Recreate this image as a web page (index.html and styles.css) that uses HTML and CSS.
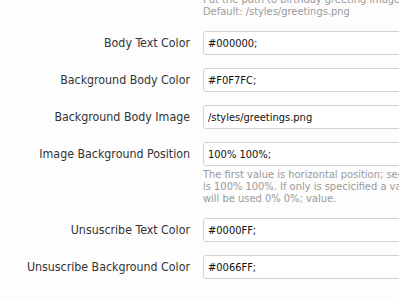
FILE: index.html
```html
<!DOCTYPE html>
<html>
<head>
<meta charset="utf-8">
<link rel="stylesheet" href="styles.css">
</head>
<body>
<div class="form">
  <div class="row">
    <div class="label"></div>
    <div class="field">
      <p class="hint">Put the path to birthday greeting image.<br>Default: /styles/greetings.png</p>
    </div>
  </div>
  <div class="row">
    <label class="label">Body Text Color</label>
    <div class="field"><input class="input" type="text" value="#000000;"></div>
  </div>
  <div class="row">
    <label class="label">Background Body Color</label>
    <div class="field"><input class="input" type="text" value="#F0F7FC;"></div>
  </div>
  <div class="row">
    <label class="label">Background Body Image</label>
    <div class="field"><input class="input" type="text" value="/styles/greetings.png"></div>
  </div>
  <div class="row">
    <label class="label">Image Background Position</label>
    <div class="field">
      <input class="input" type="text" value="100% 100%;">
      <p class="hint">The first value is horizontal position; second value is vertical position. Default value<br>is 100% 100%. If only is specicified a value, the other value will be 50%. If nothing<br>will be used 0% 0%; value.</p>
    </div>
  </div>
  <div class="row">
    <label class="label">Unsuscribe Text Color</label>
    <div class="field"><input class="input" type="text" value="#0000FF;"></div>
  </div>
  <div class="row">
    <label class="label">Unsuscribe Background Color</label>
    <div class="field"><input class="input" type="text" value="#0066FF;"></div>
  </div>
</div>
</body>
</html>
```
FILE: styles.css
```css
html, body {
  margin: 0;
  padding: 0;
  background: #fdfdfd;
  overflow: hidden;
}
body {
  width: 399px;
  height: 300px;
  font-family: "DejaVu Sans Condensed", "DejaVu Sans", sans-serif;
}
.form {
  display: flex;
  flex-direction: column;
  gap: 13px;
  margin-top: -6px;
}
.row {
  display: grid;
  grid-template-columns: 190px 320px;
  column-gap: 13px;
  align-items: start;
}
.label {
  text-align: right;
  font-size: 12.3px;
  color: #333;
  line-height: 24px;
  white-space: nowrap;
}
.field {
  display: flex;
  flex-direction: column;
}
.input {
  box-sizing: border-box;
  width: 320px;
  height: 24px;
  margin: 0;
  padding: 0 4px;
  border: 1px solid #d2d2d2;
  border-radius: 3px;
  background: #fff;
  font-family: "DejaVu Sans Condensed", "DejaVu Sans", sans-serif;
  font-size: 11px;
  color: #111;
}
.hint {
  margin: 3px 0 0;
  font-size: 11px;
  line-height: 12px;
  color: #9a9a9a;
  white-space: nowrap;
}
.row:first-child .hint {
  margin-top: 0;
}
```
